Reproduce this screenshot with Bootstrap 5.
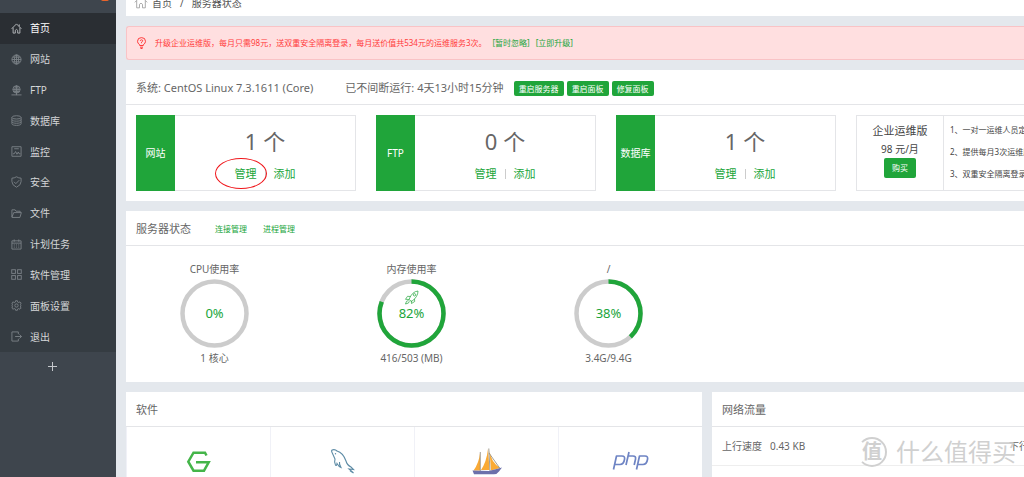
<!DOCTYPE html>
<html lang="zh-CN">
<head>
<meta charset="utf-8">
<meta name="viewport" content="width=device-width, initial-scale=1">
<title>服务器状态</title>
<link href="https://cdn.jsdelivr.net/npm/bootstrap@5.3.0/dist/css/bootstrap.min.css" rel="stylesheet">
<style>
:root { --green: #20a53a; --line: #e4e5e8; }
body { font: 11px/20px "Noto Sans", "Noto Sans CJK SC", sans-serif; color: #666; background: #e4e8ed; overflow: hidden; }
a { color: var(--green); text-decoration: none; }
svg { display: block; flex: none; }
.ico { fill: none; stroke: currentColor; stroke-width: 1; }
.fs-tiny { font-size: 8px; }
.fs-body { font-size: 10px; }
.side { width: 116px; background: #3e454d; }
.side-top { height: 13px; padding-right: 7px; }
.msg-count { width: 8px; height: 11px; margin-top: -10px; border-radius: 2px; background: #e8642b; }
.menu { display: grid; grid-auto-rows: 1fr; min-height: 339px; background: #353c42; }
.menu a { color: #d4d6d8; font-size: 10px; padding-left: 11px; gap: 8px; height: 100%; }
.menu svg { color: #7b8187; }
.menu .active { background: #2a2e33; color: #fff; }
.menu .active svg { color: #b9bcbf; }
.add { height: 28px; padding-right: 17px; color: #c5c8cc; background: none; border: 0; }
.main { gap: 10px; padding-left: 10px; min-width: 0; }
.crumbs { height: 16px; padding: 0 8px 7px; line-height: 12px; font-size: 10px; color: #555; }
.crumbs a { color: #555; }
.notice { height: 34px; padding: 0 9px; gap: 8px; color: #ff3b3b; background: #ffdfe0; border: 1px solid #f9c3c6; border-right: 0; border-radius: 3px 0 0 3px; }
.notice a { margin-left: 6px; }
.panel-box { background: #fff; }
.panel-top { height: 35px; padding: 2px 10px 0; border-bottom: 1px solid var(--line); white-space: nowrap; }
.uptime { margin-left: 32px; }
.tools { gap: 3px; margin-left: 10px; }
.btn-green { --bs-btn-color: #fff; --bs-btn-bg: var(--green); --bs-btn-border-color: var(--green); --bs-btn-hover-color: #fff; --bs-btn-hover-bg: #10952a; --bs-btn-padding-x: 5px; --bs-btn-padding-y: 0px; --bs-btn-font-size: 8px; --bs-btn-border-radius: 2px; --bs-btn-border-width: 0px; --bs-btn-line-height: 15px; }
.btn-buy { --bs-btn-padding-x: 8px; --bs-btn-line-height: 20px; }
.stats { display: grid; grid-template-columns: 220fr 220fr 220fr 168fr; gap: 20px; padding: 10px 0 10px 10px; }
.stat { height: 76px; border: 1px solid var(--line); }
.stat-tag { width: 39px; margin: -1px 0 -1px -1px; background: var(--green); color: #fff; font-size: 10px; }
.stat-num { font-size: 22px; line-height: 30px; padding-top: 10px; }
.stat-links { padding-top: 8px; }
.stat-links i { width: 1px; height: 10px; margin: 0 8px; background: #ccc; }
.ring-mark { left: 78px; top: 42px; width: 52px; height: 31px; border: 1px solid #f0161b; border-radius: 50%; pointer-events: none; }
.plan { height: 76px; border: 1px solid var(--line); border-right: 0; overflow: hidden; color: #444; }
.plan-name { width: 87px; border-right: 1px solid var(--line); padding-top: 6px; line-height: 18px; }
.plan-list { padding: 3px 0 0 6px; line-height: 22px; white-space: nowrap; }
.gauges { display: grid; grid-template-columns: 177fr 177fr 177fr 307fr; gap: 20px; padding: 13px 0 14px; font-size: 10px; text-align: center; }
.dial text { font-size: 13px; fill: var(--green); text-anchor: middle; }
.bottom { display: grid; grid-template-columns: 576fr 312fr; gap: 10px; }
.apps { display: grid; grid-template-columns: repeat(4, 1fr); }
.apps a { height: 90px; padding-top: 20px; border-left: 1px solid #f0f1f7; }
.apps svg { margin: 0 auto; }
.speed { height: 39px; padding-left: 10px; border-bottom: 1px solid #eee; white-space: nowrap; font-size: 10px; }
.down { width: 15px; }
.stamp { right: 8px; bottom: 8px; gap: 9px; color: #d0d0d0; font-size: 24px; line-height: 34px; white-space: nowrap; pointer-events: none; }
.stamp-seal { width: 30px; height: 30px; border: 2px solid #d0d0d0; border-left-color: transparent; border-radius: 50%; font-size: 20px; line-height: 26px; font-weight: bold; }
</style>
</head>
<body>
<div class="d-flex vh-100 position-relative overflow-hidden">
  <aside class="side flex-shrink-0">
    <div class="side-top d-flex justify-content-end"><span class="msg-count"></span></div>
    <ul class="menu list-unstyled m-0">
      <li><a class="active d-flex align-items-center" href="#"><svg class="ico" width="11" height="11" viewBox="0 0 12 12"><path d="M.7 6.3 6 1l5.3 5.3M2.3 5v6h2.4V8q1.3-2 2.6 0v3h2.4V5M9 3.7V1.5"/></svg>首页</a></li>
      <li><a class="d-flex align-items-center" href="#"><svg class="ico" width="11" height="11" viewBox="0 0 12 12"><circle cx="6" cy="6" r="5"/><ellipse cx="6" cy="6" rx="2.3" ry="5"/><path d="M6 1v10M1 6h10M2 3.5h8M2 8.5h8"/></svg>网站</a></li>
      <li><a class="d-flex align-items-center" href="#"><svg class="ico" width="11" height="11" viewBox="0 0 12 12"><circle cx="6" cy="4.8" r="4"/><ellipse cx="6" cy="4.8" rx="1.8" ry="4"/><path d="M2 4.8h8M6 1v10M.5 10.8h11M2.5 7h7"/></svg>FTP</a></li>
      <li><a class="d-flex align-items-center" href="#"><svg class="ico" width="11" height="11" viewBox="0 0 12 12"><ellipse cx="6" cy="2.6" rx="5" ry="1.8"/><path d="M1 2.6v7c0 2.3 10 2.3 10 0v-7M1 5c0 2.3 10 2.3 10 0M1 7.3c0 2.3 10 2.3 10 0"/></svg>数据库</a></li>
      <li><a class="d-flex align-items-center" href="#"><svg class="ico" width="11" height="11" viewBox="0 0 12 12"><path d="M1 .8h10v10.4H1zM3.500 3h5M2 8.500h1.500L5 6l1.500 3L8 6.500l.8 2h1.500"/></svg>监控</a></li>
      <li><a class="d-flex align-items-center" href="#"><svg class="ico" width="11" height="12" viewBox="0 0 12 13"><path d="M6 .8Q8.500 2.400 11 2.300V6Q11 10 6 12.200 1 10 1 6V2.300Q3.500 2.400 6 .8zM3.300 6.300l2 2 3.700-3.800"/></svg>安全</a></li>
      <li><a class="d-flex align-items-center" href="#"><svg class="ico" width="11" height="11" viewBox="0 0 12 12"><path d="M1 10V2h3.500l1 1.500H10V5M1 10.300h8.700L11.300 5H3L1 10"/></svg>文件</a></li>
      <li><a class="d-flex align-items-center" href="#"><svg class="ico" width="11" height="11" viewBox="0 0 12 12"><path d="M1 2h10v9H1zM1 4.500h10M3.500.5V3M8.500.5V3M3 6.500h1.200M5.400 6.500h1.200M7.800 6.500H9M3 8.800h1.200M5.400 8.800h1.200M7.800 8.800H9"/></svg>计划任务</a></li>
      <li><a class="d-flex align-items-center" href="#"><svg class="ico" width="11" height="11" viewBox="0 0 12 12"><rect x=".8" y=".8" width="4" height="4"/><rect x="7.200" y=".8" width="4" height="4"/><rect x=".8" y="7.200" width="4" height="4"/><rect x="7.200" y="7.200" width="4" height="4"/></svg>软件管理</a></li>
      <li><a class="d-flex align-items-center" href="#"><svg class="ico" width="11" height="11" viewBox="0 0 12 12"><circle cx="6" cy="6" r="1.800"/><path d="M5 .8h2l.3 1.500 1.200.5 1.300-.8 1.300 1.400-.8 1.200.4 1.100v.8l-.5 1.100.8 1.200-1.300 1.300-1.300-.8-1.100.5L7 11.200H5l-.3-1.400-1.200-.5-1.300.8L.9 8.800l.8-1.200-.5-1.100v-.8l.5-1.200-.8-1.200 1.300-1.300 1.300.8 1.200-.5z"/></svg>面板设置</a></li>
      <li><a class="d-flex align-items-center" href="#"><svg class="ico" width="11" height="11" viewBox="0 0 12 12"><path d="M8 3.500V1H1v10h7V8.500M4.500 6h7M9.300 3.800 11.500 6 9.300 8.200"/></svg>退出</a></li>
    </ul>
    <button class="add w-100 d-flex align-items-center justify-content-center" type="button" aria-label="添加菜单"><svg class="ico" width="9" height="9" viewBox="0 0 9 9"><path d="M4.500 0v9M0 4.500h9"/></svg></button>
  </aside>

  <main class="main flex-grow-1 d-flex flex-column">
    <nav class="crumbs panel-box d-flex align-items-end flex-shrink-0 overflow-hidden">
      <svg class="ico me-1" width="14" height="14" viewBox="0 0 12 12" style="color:#999"><path stroke-width=".7" d="M.7 6.300 6 1l5.300 5.300M2.300 5v6h2.400V8q1.300-2 2.600 0v3h2.400V5"/></svg>
      <a href="#">首页</a><span class="px-2">/</span><span>服务器状态</span>
    </nav>

    <div class="notice fs-tiny d-flex align-items-center flex-shrink-0">
      <svg class="ico" width="11" height="12" viewBox="0 0 11 12"><path d="M3.700 8.500V7.700Q1.500 6.500 1.500 4.300A4 3.700 0 0 1 9.500 4.300Q9.500 6.500 7.300 7.700V8.500zM4 10.200h3M4.500 11.500h2M4.300 3.800q.1-1 1.200-1 1.200 0 1.200 1 0 .7-1.200 1.400v1"/></svg>
      <span>升级企业运维版，每月只需98元，送双重安全隔离登录，每月送价值共534元的运维服务3次。<a href="#">[暂时忽略]</a><a href="#">[立即升级]</a></span>
    </div>

    <section class="panel-box">
      <div class="panel-top d-flex align-items-center">
        <span>系统: CentOS Linux 7.3.1611 (Core)</span>
        <span class="uptime">已不间断运行: 4天13小时15分钟</span>
        <div class="tools d-flex">
          <button class="btn btn-green" type="button">重启服务器</button>
          <button class="btn btn-green" type="button">重启面板</button>
          <button class="btn btn-green" type="button">修复面板</button>
        </div>
      </div>
      <div class="stats">
        <div class="stat d-flex position-relative">
          <div class="stat-tag d-flex align-items-center justify-content-center">网站</div>
          <div class="flex-grow-1 text-center"><div class="stat-num">1 个</div><div class="stat-links d-flex justify-content-center align-items-center"><a href="#">管理</a><i></i><a href="#">添加</a></div></div>
          <span class="ring-mark position-absolute"></span>
        </div>
        <div class="stat d-flex">
          <div class="stat-tag d-flex align-items-center justify-content-center">FTP</div>
          <div class="flex-grow-1 text-center"><div class="stat-num">0 个</div><div class="stat-links d-flex justify-content-center align-items-center"><a href="#">管理</a><i></i><a href="#">添加</a></div></div>
        </div>
        <div class="stat d-flex">
          <div class="stat-tag d-flex align-items-center justify-content-center">数据库</div>
          <div class="flex-grow-1 text-center"><div class="stat-num">1 个</div><div class="stat-links d-flex justify-content-center align-items-center"><a href="#">管理</a><i></i><a href="#">添加</a></div></div>
        </div>
        <div class="plan d-flex">
          <div class="plan-name flex-shrink-0 text-center"><div>企业运维版</div><div class="fs-body">98 元/月</div><button class="btn btn-green btn-buy" type="button">购买</button></div>
          <div class="plan-list fs-tiny"><div>1、一对一运维人员定制</div><div>2、提供每月3次运维服务</div><div>3、双重安全隔离登录</div></div>
        </div>
      </div>
    </section>

    <section class="panel-box">
      <div class="panel-top d-flex align-items-center">
        <span class="me-4">服务器状态</span><a class="fs-tiny me-3" href="#">连接管理</a><a class="fs-tiny" href="#">进程管理</a>
      </div>
      <div class="gauges">
        <div><div>CPU使用率</div>
          <svg class="dial mx-auto" width="69" height="69" viewBox="0 0 69 69"><circle cx="34.500" cy="34.500" r="32" fill="none" stroke="#ccc" stroke-width="4.500"/><text x="34.500" y="39">0%</text></svg>
          <div>1 核心</div></div>
        <div><div>内存使用率</div>
          <svg class="dial mx-auto" width="69" height="69" viewBox="0 0 69 69"><g fill="none" stroke-width="4.500"><circle cx="34.500" cy="34.500" r="32" stroke="#ccc"/><circle cx="34.500" cy="34.500" r="32" stroke="#20a53a" pathLength="100" stroke-dasharray="81 100" transform="rotate(-90 34.500 34.500)"/></g><g fill="none" stroke="#20a53a" stroke-width=".7"><path d="M32 20.500Q35 12.500 41 12Q41 18 34.500 22.500zM33.500 17.500l-3-.2-2 3 3.500.2M37.500 20l.2 2.500-3.200 2-.2-3M31.500 21.500l-2 .8-1 2.700 3-1 .8-1.800"/><circle cx="37.500" cy="15.800" r="1.200"/></g><text x="34.500" y="39">82%</text></svg>
          <div>416/503 (MB)</div></div>
        <div><div>/</div>
          <svg class="dial mx-auto" width="69" height="69" viewBox="0 0 69 69"><g fill="none" stroke-width="4.500"><circle cx="34.500" cy="34.500" r="32" stroke="#ccc"/><circle cx="34.500" cy="34.500" r="32" stroke="#20a53a" pathLength="100" stroke-dasharray="38 100" transform="rotate(-90 34.500 34.500)"/></g><text x="34.500" y="39">38%</text></svg>
          <div>3.4G/9.4G</div></div>
      </div>
    </section>

    <div class="bottom">
      <section class="panel-box">
        <div class="panel-top d-flex align-items-center">软件</div>
        <div class="apps">
          <a href="#" aria-label="Nginx"><svg width="30" height="30" viewBox="0 0 30 30"><path d="M22.500 8.500 21 5.700H9.500L4.300 14.700 9.500 23.700H20L24.700 15.300H12" fill="none" stroke="#44b549" stroke-width="2.500"/></svg></a>
          <a href="#" aria-label="MySQL"><svg width="30" height="30" viewBox="0 0 30 30"><path d="M4 3q-1 1 .5 3.500L7 12q-1 3 .5 6 1 1.500 1.500-1.500 2 3.500 4 4-2-3-1.500-5.500M4 3q3-1 5 1 6 1.500 9 10 1 4 5 6l2.500 2.500-4.500-.5 4.500 4-3.500-2.200" fill="none" stroke="#5d8ba5" stroke-width="1.100"/><circle cx="7.500" cy="6.800" r=".7" fill="#5d8ba5"/></svg></a>
          <a href="#" aria-label="phpMyAdmin"><svg width="32" height="30" viewBox="0 0 32 30"><path d="M9 6Q8 16 2.500 23.500H9zM17 2Q15.500 15 10 23h8.500zM18.500 4Q20 15 29 21l-9 2.500z" fill="#faaa35"/><path d="M9.300 5v19M17.800 1.500 19 24M18 6l11 15.500" stroke="#8a8578" stroke-width=".8" fill="none"/><path d="M1.500 23.500 18 24l13-3.500-3 4q-2 2.800-5 2.800H3z" fill="#6c70ab"/></svg></a>
          <a href="#" aria-label="PHP"><svg width="38" height="30" viewBox="0 0 38 30"><g fill="none" stroke="#6e84c4" stroke-width="1.700" stroke-linejoin="round"><path d="M1.500 22.500 4.500 9H10q3.300 0 2.500 3.500-.8 5-4.500 5H3"/><path d="M17 5 14 18M16.200 9H21q3.200 0 2.500 3.200L22.200 18"/><path d="M24.500 22.500l3-13.500H33q3.300 0 2.500 3.500-.8 5-4.500 5h-5"/></g></svg></a>
        </div>
      </section>
      <section class="panel-box overflow-hidden">
        <div class="panel-top d-flex align-items-center">网络流量</div>
        <div class="speed d-flex align-items-center"><span>上行速度</span><span class="ms-2">0.43 KB</span><span class="down ms-auto flex-shrink-0">下行</span></div>
      </section>
    </div>
  </main>
  <div class="stamp position-absolute d-flex align-items-center"><span class="stamp-seal text-center">值</span><span>什么值得买</span></div>
</div>
<script src="https://cdn.jsdelivr.net/npm/bootstrap@5.3.0/dist/js/bootstrap.bundle.min.js"></script>
</body>
</html>
